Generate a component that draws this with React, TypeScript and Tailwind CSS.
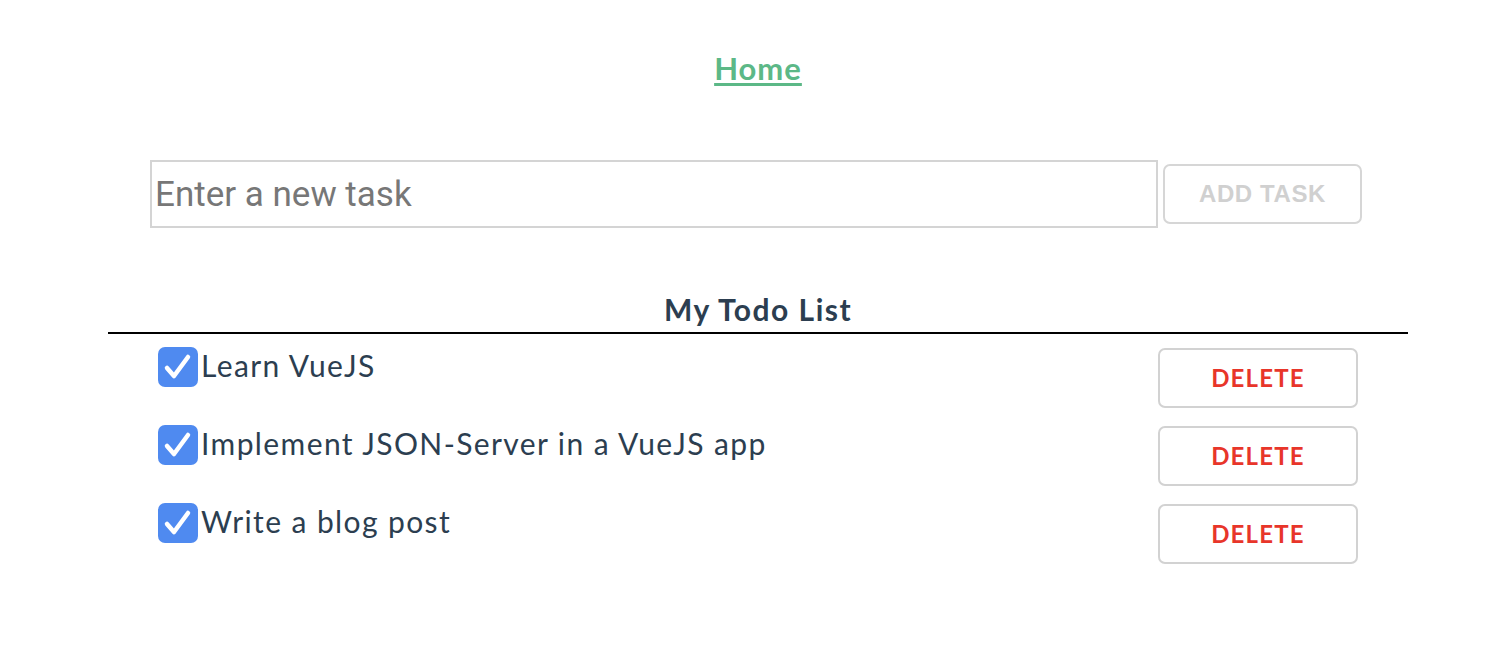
import React from 'react';

const tasks = ['Learn VueJS', 'Implement JSON-Server in a VueJS app', 'Write a blog post'];

function Check() {
  return (
    <svg width="42" height="42" viewBox="0 0 42 42" className="shrink-0">
      <rect x="1" y="1" width="40" height="40" rx="7" fill="#4f8af0" />
      <path d="M10 22 L17 30 L31 11" fill="none" stroke="#fff" strokeWidth="4.5" strokeLinecap="round" strokeLinejoin="round" />
    </svg>
  );
}

export default function App() {
  return (
    <div className="min-h-screen w-full bg-white font-['Lato','Noto_Sans',sans-serif] text-[#2c3e50]">
      <nav className="flex justify-center pt-[46px]">
        <a href="#" className="translate-x-[2px] text-[31px] leading-[44px] font-bold tracking-[1px] text-[#5cb887] underline decoration-[3px] underline-offset-[3px]">
          Home
        </a>
      </nav>

      <div className="mx-auto mt-[70px] flex w-[1212px] items-center gap-[5px]">
        <input
          placeholder="Enter a new task"
          className="h-[68px] w-[1008px] border-2 border-[#d4d4d4] px-[3px] font-['Roboto',sans-serif] text-[35px] text-[#333] outline-none placeholder:text-[#777]"
        />
        <button className="h-[60px] w-[199px] rounded-[7px] border-2 border-[#d6d6d6] font-['Liberation_Sans',sans-serif] text-[24px] font-bold tracking-[0.6px] text-[#d0d0d0]">
          ADD TASK
        </button>
      </div>

      <div className="mx-auto mt-[64px] w-[1300px] translate-x-[2px]">
        <h2 className="text-center text-[30px] font-bold leading-[34px] tracking-[1.5px]">My Todo List</h2>
        <div className="mt-[6px] h-[2px] bg-black" />
        <ul className="mt-[12px] flex flex-col gap-[18px] pl-[49px] pr-[50px]">
          {tasks.map((t) => (
            <li key={t} className="flex h-[60px] items-start justify-between">
              <label className="flex items-center">
                <Check />
                <span className="ml-[2px] text-[30px] leading-[42px] tracking-[1.4px] -translate-y-[2px]">{t}</span>
              </label>
              <button className="mt-[2px] h-[60px] w-[200px] rounded-[7px] border-2 border-[#d2d2d2] text-[24px] font-bold tracking-[1.2px] text-[#e8352a]">
                DELETE
              </button>
            </li>
          ))}
        </ul>
      </div>
    </div>
  );
}
